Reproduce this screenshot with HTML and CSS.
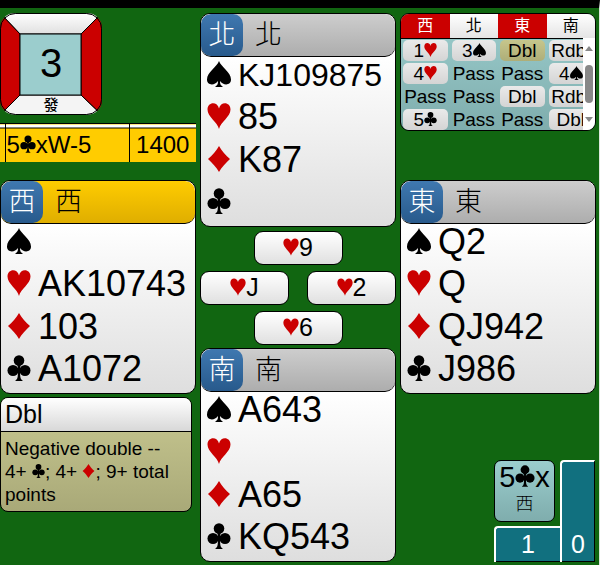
FILE: index.html
```html
<!DOCTYPE html>
<html lang="zh-TW">
<head>
    <meta charset="UTF-8">
    <meta name="viewport" content="width=device-width, initial-scale=1.0">
    <title>Bridge Table</title>
    <link rel="stylesheet" href="styles.css">
</head>
<body>
    <!-- Suit symbols -->
    <svg class="sprites" aria-hidden="true">
        <symbol id="spade" viewBox="0 0 24 26">
            <path d="M12 0C14 6 24 11 24 18.5C24 24.5 16.5 25 13 20C13 23 13.6 24.6 15.5 25.2V26H8.5V25.2C10.4 24.6 11 23 11 20C7.500 25 0 24.500 0 18.500C0 11 10 6 12 0Z"/>
        </symbol>
        <symbol id="heart" viewBox="0 0 24 26">
            <path d="M12 26C10.500 19 0.500 14 0.500 6.500C0.500 -1.500 10.500 -2 12 5.500C13.500 -2 23.500 -1.500 23.500 6.500C23.500 14 13.500 19 12 26Z"/>
        </symbol>
        <symbol id="diamond" viewBox="0 0 24 26">
            <path d="M12 0C14.500 4.500 19 9.500 23 13C19 16.500 14.500 21.500 12 26C9.500 21.500 5 16.500 1 13C5 9.500 9.500 4.500 12 0Z"/>
        </symbol>
        <symbol id="club" viewBox="0 0 24 26">
            <circle cx="12" cy="5.500" r="5.300"/>
            <circle cx="6" cy="15.500" r="5.500"/>
            <circle cx="18" cy="15.500" r="5.500"/>
            <path d="M10 9H14L13 13L17 15L13.200 17C13 22 13.600 24.600 15.500 25.200V26H8.500V25.200C10.400 24.600 11 22 10.800 17L7 15L11 13Z"/>
        </symbol>
    </svg>

    <main class="table">
        <section class="column">
            <div class="info">
                <svg class="board" viewBox="0 0 102 102" role="img" aria-label="Board 3">
                    <defs>
                        <clipPath id="board-shape"><rect x="0" y="0" width="102" height="102" rx="15"/></clipPath>
                        <linearGradient id="board-white" x1="0" y1="0" x2="0" y2="1">
                            <stop offset="0" stop-color="#ffffff"/>
                            <stop offset="1" stop-color="#e0e0e0"/>
                        </linearGradient>
                    </defs>
                    <g clip-path="url(#board-shape)" stroke="#000">
                        <path d="M0 0H102L81 21H20Z" fill="url(#board-white)"/>
                        <path d="M0 102H102L81 82H20Z" fill="#f4f4f4"/>
                        <path d="M0 0L20 21V82L0 102Z" fill="#cb0000"/>
                        <path d="M102 0L81 21V82L102 102Z" fill="#cb0000"/>
                        <rect x="20" y="21" width="61" height="61" fill="#9bcdcd"/>
                    </g>
                    <rect x="0.5" y="0.5" width="101" height="101" rx="15" fill="none" stroke="#000"/>
                    <text class="board-number" x="51" y="64">3</text>
                    <text class="board-dealer" x="51" y="97">發</text>
                </svg>
                <table class="result">
                    <tr>
                        <td class="result-edge"></td>
                        <td class="result-contract">5<svg class="suit" role="img" aria-label="clubs"><use href="#club"/></svg>xW-5</td>
                        <td class="result-score">1400</td>
                    </tr>
                </table>
            </div>
            <article class="hand active">
                <h2 class="hand-header"><span class="seat">西</span><span class="name">西</span></h2>
                <ul class="suits">
                    <li><svg class="suit" role="img" aria-label="spades"><use href="#spade"/></svg></li>
                    <li><svg class="suit red" role="img" aria-label="hearts"><use href="#heart"/></svg>AK10743</li>
                    <li><svg class="suit red" role="img" aria-label="diamonds"><use href="#diamond"/></svg>103</li>
                    <li><svg class="suit" role="img" aria-label="clubs"><use href="#club"/></svg>A1072</li>
                </ul>
            </article>
            <aside class="explain">
                <h3>Dbl</h3>
                <p>Negative double -- 4+ <svg class="suit" role="img" aria-label="clubs"><use href="#club"/></svg>; 4+ <svg class="suit red" role="img" aria-label="diamonds"><use href="#diamond"/></svg>; 9+ total points</p>
            </aside>
        </section>

        <section class="column">
            <article class="hand">
                <h2 class="hand-header"><span class="seat">北</span><span class="name">北</span></h2>
                <ul class="suits">
                    <li class="long"><svg class="suit" role="img" aria-label="spades"><use href="#spade"/></svg>KJ109875</li>
                    <li><svg class="suit red" role="img" aria-label="hearts"><use href="#heart"/></svg>85</li>
                    <li><svg class="suit red" role="img" aria-label="diamonds"><use href="#diamond"/></svg>K87</li>
                    <li><svg class="suit" role="img" aria-label="clubs"><use href="#club"/></svg></li>
                </ul>
            </article>
            <div class="trick">
                <div class="trick-row"><div class="card"><svg class="suit red" role="img" aria-label="hearts"><use href="#heart"/></svg>9</div></div>
                <div class="trick-row sides">
                    <div class="card"><svg class="suit red" role="img" aria-label="hearts"><use href="#heart"/></svg>J</div>
                    <div class="card"><svg class="suit red" role="img" aria-label="hearts"><use href="#heart"/></svg>2</div>
                </div>
                <div class="trick-row"><div class="card"><svg class="suit red" role="img" aria-label="hearts"><use href="#heart"/></svg>6</div></div>
            </div>
            <article class="hand">
                <h2 class="hand-header"><span class="seat">南</span><span class="name">南</span></h2>
                <ul class="suits">
                    <li><svg class="suit" role="img" aria-label="spades"><use href="#spade"/></svg>A643</li>
                    <li><svg class="suit red" role="img" aria-label="hearts"><use href="#heart"/></svg></li>
                    <li><svg class="suit red" role="img" aria-label="diamonds"><use href="#diamond"/></svg>A65</li>
                    <li><svg class="suit" role="img" aria-label="clubs"><use href="#club"/></svg>KQ543</li>
                </ul>
            </article>
        </section>

        <section class="column">
            <div class="info">
                <div class="auction">
                    <table class="bids">
                        <thead>
                            <tr><th class="vul">西</th><th>北</th><th class="vul">東</th><th>南</th></tr>
                        </thead>
                        <tbody>
                            <tr>
                                <td><span class="bid">1<svg class="suit red" role="img" aria-label="hearts"><use href="#heart"/></svg></span></td>
                                <td><span class="bid">3<svg class="suit" role="img" aria-label="spades"><use href="#spade"/></svg></span></td>
                                <td><span class="bid alerted">Dbl</span></td>
                                <td><span class="bid">Rdbl</span></td>
                            </tr>
                            <tr>
                                <td><span class="bid">4<svg class="suit red" role="img" aria-label="hearts"><use href="#heart"/></svg></span></td>
                                <td>Pass</td>
                                <td>Pass</td>
                                <td><span class="bid">4<svg class="suit" role="img" aria-label="spades"><use href="#spade"/></svg></span></td>
                            </tr>
                            <tr>
                                <td>Pass</td>
                                <td>Pass</td>
                                <td><span class="bid">Dbl</span></td>
                                <td><span class="bid">Rdbl</span></td>
                            </tr>
                            <tr>
                                <td><span class="bid">5<svg class="suit" role="img" aria-label="clubs"><use href="#club"/></svg></span></td>
                                <td>Pass</td>
                                <td>Pass</td>
                                <td><span class="bid">Dbl</span></td>
                            </tr>
                        </tbody>
                    </table>
                    <div class="scrollbar">
                        <svg viewBox="0 0 8 5"><path d="M0 5L4 0L8 5Z" fill="#888"/></svg>
                        <div class="thumb"></div>
                        <svg viewBox="0 0 8 5"><path d="M0 0L4 5L8 0Z" fill="#888"/></svg>
                    </div>
                </div>
            </div>
            <article class="hand">
                <h2 class="hand-header"><span class="seat">東</span><span class="name">東</span></h2>
                <ul class="suits">
                    <li><svg class="suit" role="img" aria-label="spades"><use href="#spade"/></svg>Q2</li>
                    <li><svg class="suit red" role="img" aria-label="hearts"><use href="#heart"/></svg>Q</li>
                    <li><svg class="suit red" role="img" aria-label="diamonds"><use href="#diamond"/></svg>QJ942</li>
                    <li><svg class="suit" role="img" aria-label="clubs"><use href="#club"/></svg>J986</li>
                </ul>
            </article>
            <div class="score">
                <div class="score-left">
                    <div class="contract">
                        <div class="contract-bid">5<svg class="suit" role="img" aria-label="clubs"><use href="#club"/></svg>x</div>
                        <div class="contract-seat">西</div>
                    </div>
                    <div class="tricks won">1</div>
                </div>
                <div class="tricks lost">0</div>
            </div>
        </section>
    </main>
</body>
</html>
```
FILE: styles.css
```css
* {
    box-sizing: border-box;
}

body {
    margin: 0;
    min-height: 100vh;
    font-family: "Liberation Sans", Arial, "Noto Sans CJK TC", sans-serif;
    color: #000;
    background: #116611;
    border-top: 8px solid #000;
    border-right: 1px solid #dde8dd;
}

/* Suit symbols */
.sprites {
    display: none;
}

.suit {
    width: 16px;
    height: 18px;
    fill: currentColor;
}

.red {
    color: #cb0000;
}

/* Three columns: west, north/south, east */
.table {
    display: grid;
    grid-template-columns: repeat(3, 1fr);
    gap: 4px;
    padding: 5px 3px 4px 0;
}

.column {
    display: flex;
    flex-direction: column;
    min-width: 0;
}

.info {
    height: 167px;
}

/* Board number */
.board {
    display: block;
    width: 102px;
    height: 102px;
}

.board-number {
    font-size: 40px;
    text-anchor: middle;
}

.board-dealer {
    font-size: 15px;
    font-weight: 500;
    text-anchor: middle;
}

/* Result row */
.result {
    width: 100%;
    margin-top: 8px;
    border-collapse: collapse;
    border-top: 1px solid #000;
    font-size: 24px;
    background: #ffcc00;
}

.result td {
    height: 38px;
    padding: 4px 0 0 1px;
    border-right: 1px solid #000;
    background: linear-gradient(#fff 3px, #000 3px, #000 4px, #ffcc00 4px);
}

.result .result-edge {
    width: 5px;
}

.result .result-score {
    width: 67px;
    padding-left: 0;
    border-right: 0;
    text-align: center;
}

/* Hands */
.hand {
    border: 1px solid #000;
    border-radius: 10px;
    background: linear-gradient(#fff 20%, #dedede);
    overflow: hidden;
}

.hand-header {
    display: flex;
    align-items: stretch;
    height: 43px;
    margin: 0;
    border-bottom: 1px solid #000;
    border-radius: 10px;
    font-size: 27px;
    line-height: 42px;
    font-weight: 300;
    background: linear-gradient(#cdcdcd, #adadad);
}

.active .hand-header {
    background: linear-gradient(#ffcc00, #dfae00);
}

.seat {
    width: 42px;
    border-radius: 10px;
    text-align: center;
    color: #fff;
    background: linear-gradient(#3f78b0, #285a8c);
}

.name {
    margin-left: 12px;
}

.suits {
    display: grid;
    grid-template-rows: repeat(4, 1fr);
    height: 169px;
    margin: 0;
    padding: 0 0 0 6px;
    list-style: none;
}

.suits li {
    display: flex;
    align-items: flex-start;
    gap: 7px;
    font-size: 36px;
    line-height: 36px;
}

.suits .long {
    font-size: 32px;
}

.suits .suit {
    width: 24px;
    height: 26px;
    margin-top: 4px;
}

/* Cards played */
.trick {
    display: flex;
    flex-direction: column;
    gap: 6px;
    padding: 4px 0 3px;
}

.trick-row {
    display: flex;
    justify-content: center;
}

.sides {
    justify-content: space-between;
}

.card {
    width: 89px;
    height: 34px;
    border: 1px solid #000;
    border-radius: 9px;
    font-size: 25px;
    line-height: 30px;
    text-align: center;
    background: linear-gradient(#fff, #e0e0e0);
}

/* Auction */
.auction {
    position: relative;
    height: 118px;
    border: 1px solid #000;
    border-radius: 9px;
    overflow: hidden;
    background: linear-gradient(#9bcdcd, #7fadad);
}

.bids {
    width: 100%;
    table-layout: fixed;
    border-collapse: collapse;
    font-size: 19px;
    text-align: center;
}

.bids th {
    height: 24px;
    padding: 0;
    border-bottom: 1px solid #000;
    font-size: 16px;
    line-height: 22px;
    font-weight: 400;
    background: linear-gradient(#fff, #e4e4e4);
}

.bids .vul {
    color: #fff;
    background: #cb0000;
}

.bids td {
    height: 23px;
    padding: 1px 2px;
    line-height: 21px;
}

.bids .suit,
.explain .suit {
    width: 13px;
    height: 14px;
}

.bid {
    display: block;
    height: 21px;
    border-radius: 5px;
    background: linear-gradient(#eaeaea, #d4d4d4);
}

.alerted {
    background: linear-gradient(#c6c68c, #aeae78);
}

.scrollbar {
    position: absolute;
    top: 24px;
    right: 0;
    bottom: 0;
    width: 12px;
    display: flex;
    flex-direction: column;
    align-items: center;
    padding: 8px 0;
    background: #fff;
}

.scrollbar svg {
    width: 8px;
    height: 5px;
}

.thumb {
    width: 8px;
    height: 38px;
    margin: 14px 0 auto;
    border-radius: 4px;
    background: #888;
}

/* Explanation of the selected bid */
.explain {
    width: 192px;
    max-width: 100%;
    margin-top: 3px;
    border: 1px solid #000;
    border-radius: 8px;
    overflow: hidden;
    background: linear-gradient(#c9c992, #a9a978);
}

.explain h3 {
    margin: 0;
    padding: 0 4px;
    border-bottom: 1px solid #000;
    font-size: 25px;
    line-height: 33px;
    font-weight: 400;
    background: linear-gradient(#fff, #d8d8d8);
}

.explain p {
    margin: 0;
    padding: 5px 4px;
    font-size: 19px;
    line-height: 23px;
}

/* Contract and tricks */
.score {
    display: flex;
    justify-content: flex-end;
    margin-top: auto;
    padding-right: 1px;
}

.score-left {
    display: flex;
    flex-direction: column;
    justify-content: space-between;
    width: 66px;
    height: 102px;
}

.contract {
    width: 61px;
    height: 62px;
    border: 1px solid #000;
    border-radius: 7px;
    text-align: center;
    background: linear-gradient(#9bcdcd, #7fadad);
}

.contract-bid {
    font-size: 29px;
    line-height: 33px;
}

.contract-bid .suit {
    width: 20px;
    height: 22px;
}

.contract-seat {
    font-size: 18px;
    line-height: 20px;
    font-weight: 300;
}

.tricks {
    display: flex;
    align-items: flex-end;
    justify-content: center;
    border: 2px solid #fff;
    border-width: 2px 0 0 2px;
    border-radius: 4px 0 0 0;
    font-size: 25px;
    line-height: 36px;
    color: #fff;
    background: #11707f;
    box-shadow: inset 0 -1px #000;
}

.won {
    height: 36px;
}

.lost {
    width: 35px;
    border-right: 1px solid #000;
}
```
